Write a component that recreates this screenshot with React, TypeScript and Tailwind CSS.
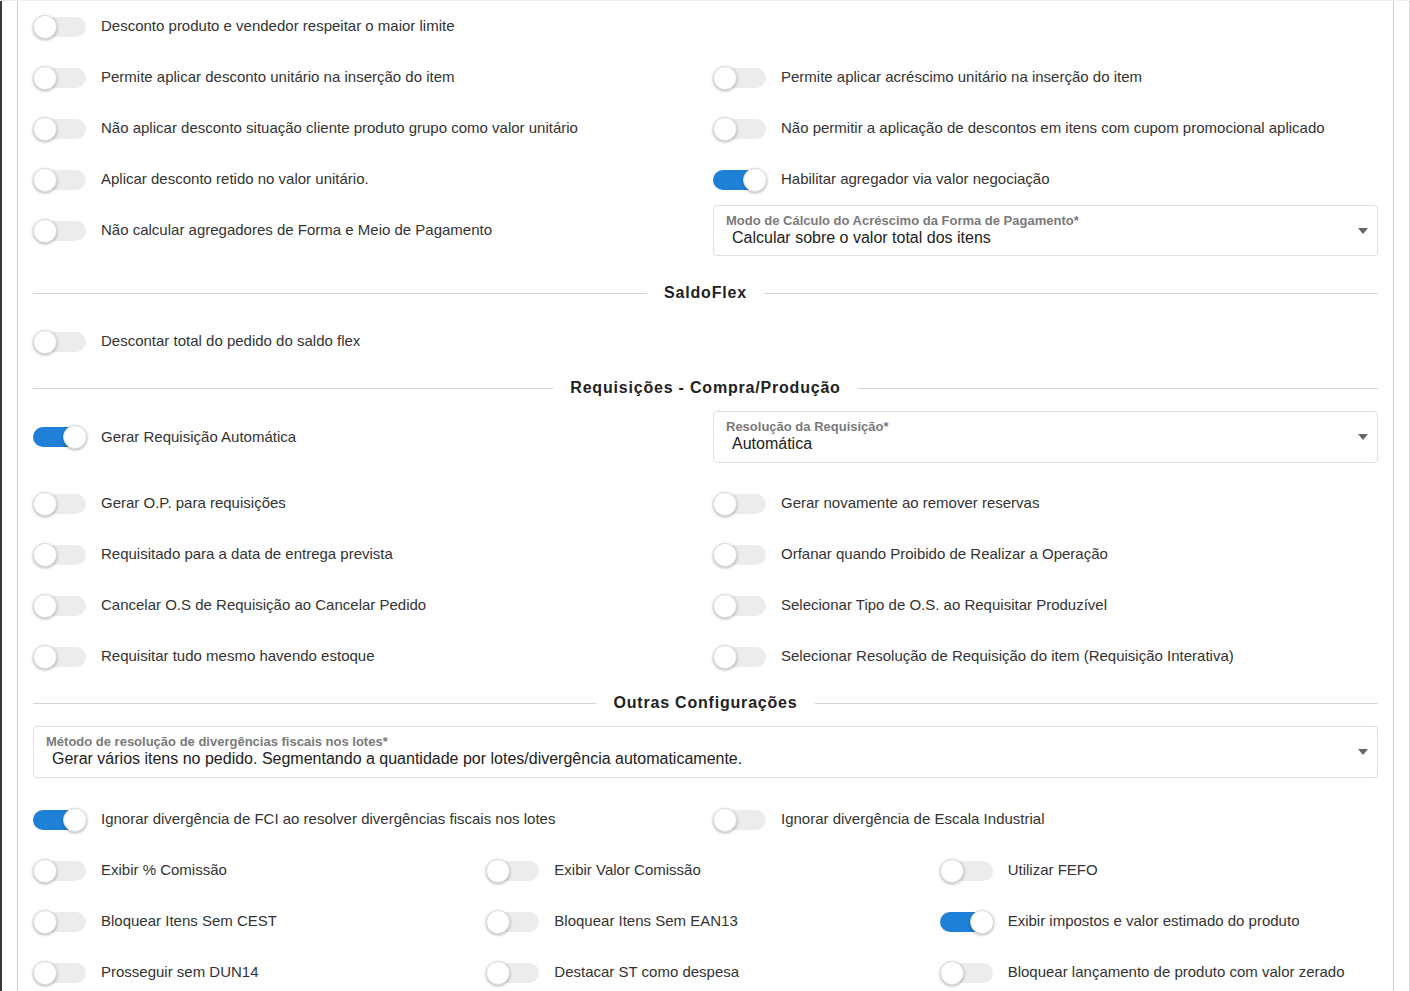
import React from "react";

function Toggle({ on = false }: { on?: boolean }) {
  return (
    <div className="relative w-[53px] h-[24px] shrink-0 flex items-center">
      <div className={`w-[53px] h-[20px] rounded-full ${on ? "bg-[#1e80d6]" : "bg-[#ececec]"}`} />
      <div
        className={`absolute top-0 ${on ? "left-[30px]" : "left-0"} w-[24px] h-[24px] rounded-full bg-white border border-[#dcdcdc] shadow-[0_1px_3px_rgba(0,0,0,0.3)]`}
      />
    </div>
  );
}

function Item({ label, on = false }: { label: string; on?: boolean }) {
  return (
    <div className="flex items-center gap-[15px]">
      <Toggle on={on} />
      <span className="text-[15px] text-[#333] whitespace-nowrap">{label}</span>
    </div>
  );
}

function Row2({ a, b }: { a?: React.ReactNode; b?: React.ReactNode }) {
  return (
    <div className="grid grid-cols-2 h-[51px] shrink-0 items-center">
      <div>{a}</div>
      <div>{b}</div>
    </div>
  );
}

function Row3({ a, b, c }: { a: React.ReactNode; b: React.ReactNode; c: React.ReactNode }) {
  return (
    <div className="grid grid-cols-3 h-[51px] shrink-0 items-center">
      <div>{a}</div>
      <div>{b}</div>
      <div>{c}</div>
    </div>
  );
}

function Select({ label, value, h = "h-[52px]" }: { label: string; value: string; h?: string }) {
  return (
    <div className={`relative ${h} mr-[15px] border border-[#dedede] rounded-[4px] pl-[12px] pt-[7px] bg-white`}>
      <div className="text-[13px] font-bold text-[#7a7a7a] leading-[15px]">{label}</div>
      <div className="text-[16px] text-[#222] leading-[20px] pl-[6px]">{value}</div>
      <div className="absolute right-[9px] top-1/2 -translate-y-1/2 w-0 h-0 border-l-[5px] border-r-[5px] border-t-[6px] border-l-transparent border-r-transparent border-t-[#666]" />
    </div>
  );
}

function Header({ title, top, bottom }: { title: string; top: string; bottom: string }) {
  return (
    <div className={`flex items-center shrink-0 mr-[15px] ${top} ${bottom}`}>
      <div className="flex-1 h-px bg-[#d4d4d4]" />
      <div className="px-[17px] h-[24px] leading-[24px] text-[16px] font-bold tracking-[0.8px] text-[#222]">{title}</div>
      <div className="flex-1 h-px bg-[#d4d4d4]" />
    </div>
  );
}

export default function App() {
  return (
    <div className="w-[1410px] h-[991px] overflow-hidden bg-white flex font-['Liberation_Sans',Arial,sans-serif] border-t border-[#f0f0f0]">
      <div className="w-[2px] shrink-0 bg-[#3a3a3a]" />
      <div className="w-[15px] shrink-0" />
      <div className="w-[1377px] shrink-0 border-l border-r border-[#cfcfcf] pl-[15px] flex flex-col">
        <Row2 a={<Item label="Desconto produto e vendedor respeitar o maior limite" />} />
        <Row2
          a={<Item label="Permite aplicar desconto unitário na inserção do item" />}
          b={<Item label="Permite aplicar acréscimo unitário na inserção do item" />}
        />
        <Row2
          a={<Item label="Não aplicar desconto situação cliente produto grupo como valor unitário" />}
          b={<Item label="Não permitir a aplicação de descontos em itens com cupom promocional aplicado" />}
        />
        <Row2
          a={<Item label="Aplicar desconto retido no valor unitário." />}
          b={<Item label="Habilitar agregador via valor negociação" on />}
        />
        <div className="grid grid-cols-2 h-[51px] shrink-0 items-center">
          <div>
            <Item label="Não calcular agregadores de Forma e Meio de Pagamento" />
          </div>
          <Select
            h="h-[51px]"
            label="Modo de Cálculo do Acréscimo da Forma de Pagamento*"
            value="Calcular sobre o valor total dos itens"
          />
        </div>

        <Header title="SaldoFlex" top="pt-[25px]" bottom="pb-[11px]" />
        <Row2 a={<Item label="Descontar total do pedido do saldo flex" />} />

        <Header title="Requisições - Compra/Produção" top="pt-[9px]" bottom="pb-[11px]" />
        <div className="grid grid-cols-2 h-[52px] shrink-0 items-center mb-[15px]">
          <div>
            <Item label="Gerar Requisição Automática" on />
          </div>
          <Select label="Resolução da Requisição*" value="Automática" />
        </div>
        <Row2
          a={<Item label="Gerar O.P. para requisições" />}
          b={<Item label="Gerar novamente ao remover reservas" />}
        />
        <Row2
          a={<Item label="Requisitado para a data de entrega prevista" />}
          b={<Item label="Orfanar quando Proibido de Realizar a Operação" />}
        />
        <Row2
          a={<Item label="Cancelar O.S de Requisição ao Cancelar Pedido" />}
          b={<Item label="Selecionar Tipo de O.S. ao Requisitar Produzível" />}
        />
        <Row2
          a={<Item label="Requisitar tudo mesmo havendo estoque" />}
          b={<Item label="Selecionar Resolução de Requisição do item (Requisição Interativa)" />}
        />

        <Header title="Outras Configurações" top="pt-[9px]" bottom="pb-[11px]" />
        <div className="mb-[16px] shrink-0">
          <Select
            label="Método de resolução de divergências fiscais nos lotes*"
            value="Gerar vários itens no pedido. Segmentando a quantidade por lotes/divergência automaticamente."
          />
        </div>
        <Row2
          a={<Item label="Ignorar divergência de FCI ao resolver divergências fiscais nos lotes" on />}
          b={<Item label="Ignorar divergência de Escala Industrial" />}
        />
        <Row3
          a={<Item label="Exibir % Comissão" />}
          b={<Item label="Exibir Valor Comissão" />}
          c={<Item label="Utilizar FEFO" />}
        />
        <Row3
          a={<Item label="Bloquear Itens Sem CEST" />}
          b={<Item label="Bloquear Itens Sem EAN13" />}
          c={<Item label="Exibir impostos e valor estimado do produto" on />}
        />
        <Row3
          a={<Item label="Prosseguir sem DUN14" />}
          b={<Item label="Destacar ST como despesa" />}
          c={<Item label="Bloquear lançamento de produto com valor zerado" />}
        />
      </div>
      <div className="w-[15px] shrink-0" />
      <div className="w-px shrink-0 bg-[#d8d8d8]" />
    </div>
  );
}
